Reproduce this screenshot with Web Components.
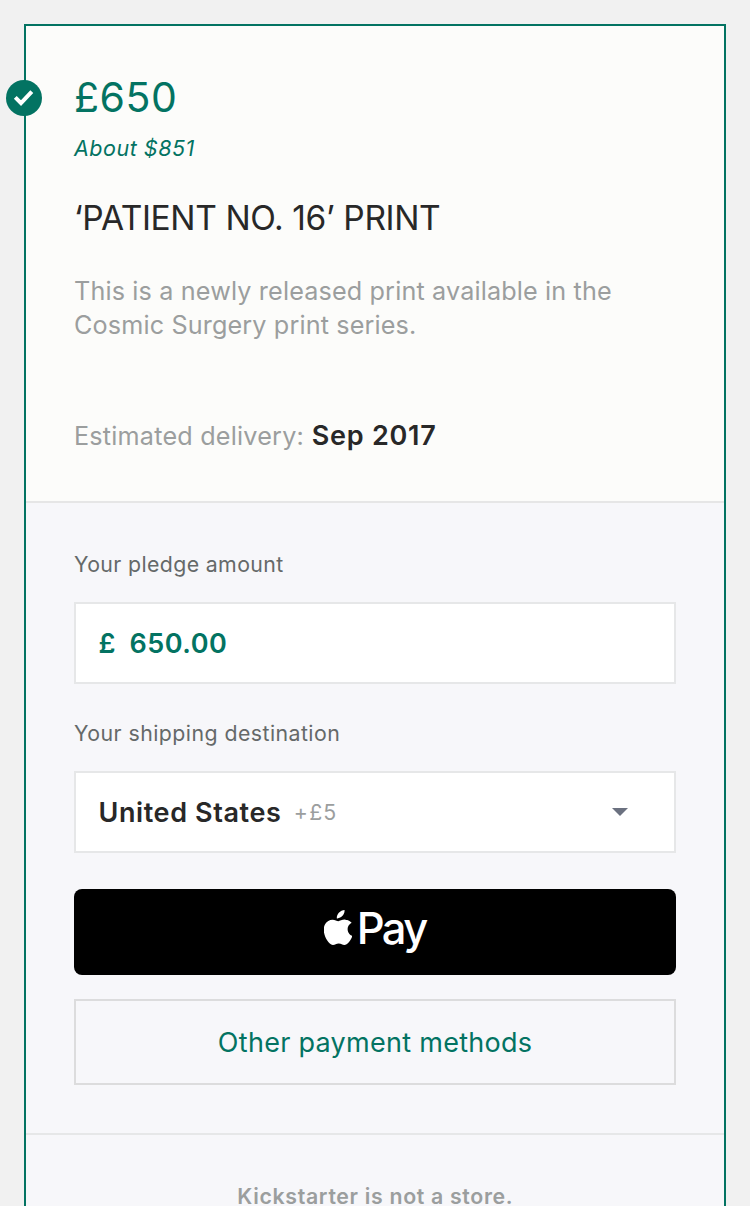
<!DOCTYPE html>
<html lang="en">
<head>
<meta charset="utf-8">
<title>Pledge</title>
<style>
html, body { margin: 0; height: 100%; overflow: hidden; }
body { background: #f1f1f1; font-family: Inter, "Liberation Sans", sans-serif; }
</style>
</head>
<body>
<reward-page></reward-page>
<script>
const define = (name, html, ready) => customElements.define(name, class extends HTMLElement {
  connectedCallback() {
    if (this.shadowRoot) return;
    const t = document.createElement('template');
    t.innerHTML = html;
    this.attachShadow({ mode: 'open' }).append(t.content.cloneNode(true));
    if (ready) ready(this);
  }
});

/* Text line tracked so that its ink spans a given width. */
define('tracked-text', `<style>:host{display:inline-block;white-space:nowrap}</style><slot></slot>`, el => {
  const text = el.textContent.trim();
  const cs = getComputedStyle(el);
  const ctx = document.createElement('canvas').getContext('2d');
  ctx.font = `${cs.fontStyle} ${cs.fontWeight} ${cs.fontSize} Inter`;
  const m = ctx.measureText(text);
  const ink = m.actualBoundingBoxRight + m.actualBoundingBoxLeft;
  const gap = (Number(el.getAttribute('ink')) - ink) / (text.length - 1);
  el.style.letterSpacing = gap.toFixed(3) + 'px';
  el.style.marginRight = (-gap).toFixed(3) + 'px';
});

define('check-badge', `<style>:host{display:block;width:36px;height:36px}svg{display:block}</style>
<svg width="36" height="36" viewBox="0 0 36 36"><circle cx="18" cy="18" r="18" fill="#037362"/><path d="M9.3 17.4 15 23.2 25.8 11.7" fill="none" stroke="#fff" stroke-width="4"/></svg>`);

define('reward-card', `<style>
:host{display:block;position:relative;box-sizing:border-box;margin:24px 24px 0;height:1240px;border:2px solid #037362;background:#f7f7fa}
check-badge{position:absolute;left:-20px;top:54px}
</style><check-badge></check-badge><slot></slot>`);

define('reward-summary', `<style>
:host{display:block;background:#fcfcfa;padding:51px 48px 48px;border-bottom:2px solid #e6e6e6}
.price{font-size:41px;line-height:40px;color:#037362}
.about{font-size:21.5px;line-height:30px;margin-top:16px;font-style:italic;color:#037362}
.title{font-size:33.5px;line-height:40px;margin-top:35px;color:#282828}
.desc{font-size:25.2px;line-height:34px;margin-top:36px;color:#9b9e9e}
.desc tracked-text{display:block}
.date{font-size:25.2px;line-height:34px;height:34px;margin-top:77px;color:#9b9e9e;display:flex;gap:8px}
.date b{font-size:27px;font-weight:600;color:#282828}
</style>
<div class="price"><tracked-text ink="99">£650</tracked-text></div>
<div class="about"><tracked-text ink="121.5">About $851</tracked-text></div>
<div class="title"><tracked-text ink="364">‘PATIENT NO. 16’ PRINT</tracked-text></div>
<div class="desc"><tracked-text ink="536">This is a newly released print available in the</tracked-text><tracked-text ink="340">Cosmic Surgery print series.</tracked-text></div>
<div class="date"><tracked-text ink="226.5">Estimated delivery:</tracked-text><b><tracked-text ink="122.5">Sep 2017</tracked-text></b></div>`);

define('form-field', `<style>
:host{display:block}
.label{font-size:21.3px;line-height:30px;color:#656969}
.box{display:flex;align-items:center;box-sizing:border-box;height:82px;margin-top:var(--gap,23px);padding:0 46px 0 22.5px;background:#fff;border:2px solid #e6e7e8}
</style><div class="label"><slot name="label"></slot></div><div class="box"><slot></slot></div>`);

define('caret-down', `<style>:host{display:block;margin-left:auto}svg{display:block}</style>
<svg width="16" height="8" viewBox="0 0 16 8"><path d="M0 0h16L8 8z" fill="#6b7180"/></svg>`);

define('apple-pay-button', `<style>
:host{display:flex;justify-content:center;box-sizing:border-box;height:86px;margin-top:36px;border-radius:8px;background:#000;color:#fff}
svg{display:block;width:28.5px;height:35px;margin:21px 4.500px 0 2px}
span{font-size:43.5px;font-weight:500;line-height:50px;margin-top:14px}
</style>
<svg viewBox="2 0 25.7 33.4" preserveAspectRatio="none"><path fill="#fff" d="M20.5 0c.3 2.1-.6 4.100-1.800 5.600-1.300 1.500-3.200 2.600-5.100 2.400-.3-2 .7-4.100 1.800-5.400C16.700 1.100 18.800.1 20.500 0zM26.900 12.200c-.2.1-3.600 2.100-3.600 6.100.1 4.800 4.200 6.400 4.300 6.500 0 .1-.700 2.300-2.200 4.500-1.300 2-2.700 3.900-4.900 4-2.100 0-2.800-1.300-5.200-1.300s-3.200 1.300-5.200 1.300c-2.100.1-3.700-2.100-5-4-2.700-3.900-4.800-11.100-2-16 1.400-2.400 3.900-3.900 6.600-4 2.100 0 4 1.400 5.300 1.400 1.200 0 3.600-1.700 6.100-1.500 1 .1 3.900.4 5.800 3z"/></svg><span><tracked-text ink="68.5">Pay</tracked-text></span>`);

define('outline-button', `<style>
:host{display:flex;align-items:center;justify-content:center;box-sizing:border-box;height:86px;margin-top:24px;border:2px solid #dcdcdd;font-size:27px;color:#037362}
</style><slot></slot>`);

define('pledge-form', `<style>
:host{display:block;padding:46px 48px 48px;border-bottom:2px solid #e6e7e8}
.amount{font-size:27px;font-weight:600;color:#037362}
.sym{margin-right:14px}
.country{font-size:27px;font-weight:600;color:#282828}
.fee{font-size:21.3px;color:#9b9e9e;margin-left:13px}
.ship{margin-top:34px}
</style>
<form-field><tracked-text slot="label" ink="209.2">Your pledge amount</tracked-text><span class="amount sym">£</span><span class="amount"><tracked-text ink="95.5">650.00</tracked-text></span></form-field>
<form-field class="ship"><tracked-text slot="label" ink="264.2">Your shipping destination</tracked-text><span class="country"><tracked-text ink="180.500">United States</tracked-text></span><span class="fee"><tracked-text ink="39.5">+£5</tracked-text></span><caret-down></caret-down></form-field>
<apple-pay-button></apple-pay-button>
<outline-button><tracked-text ink="312">Other payment methods</tracked-text></outline-button>`);

define('card-footer', `<style>
:host{display:block;padding-top:51px;text-align:center;font-size:21.3px;line-height:20px;font-weight:600;color:#9b9e9e}
</style><slot></slot>`);

define('reward-page', `<style>:host{display:flow-root}</style>
<reward-card><reward-summary></reward-summary><pledge-form></pledge-form><card-footer><tracked-text ink="273.5">Kickstarter is not a store.</tracked-text></card-footer></reward-card>`);
</script>
</body>
</html>
